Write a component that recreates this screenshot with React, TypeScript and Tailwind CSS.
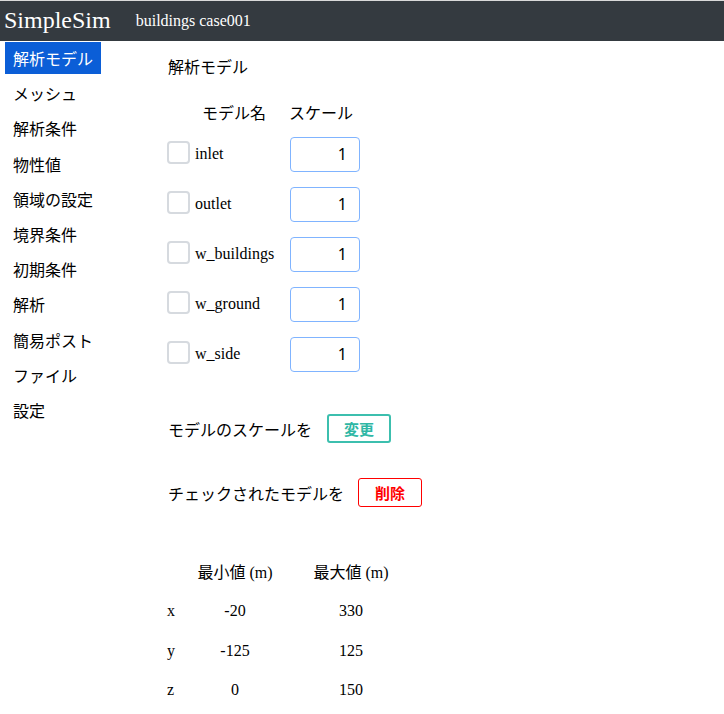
import { useState } from 'react'

const JP = "font-['Noto_Sans_CJK_JP',sans-serif]"
const SERIF = "font-['Liberation_Serif','Noto_Sans_CJK_JP',serif]"

const MENU = ['解析モデル', 'メッシュ', '解析条件', '物性値', '領域の設定', '境界条件', '初期条件', '解析', '簡易ポスト', 'ファイル', '設定']

const MODELS = ['inlet', 'outlet', 'w_buildings', 'w_ground', 'w_side']

const RANGES = [
  { axis: 'x', min: '-20', max: '330' },
  { axis: 'y', min: '-125', max: '125' },
  { axis: 'z', min: '0', max: '150' },
]

export default function App() {
  const [active, setActive] = useState(0)
  const [checked, setChecked] = useState<Record<string, boolean>>({})

  return (
    <div className="min-h-[714px] bg-white text-black">
      <header className="h-[41px] border-t border-[#d9d9d9] bg-[#343a40] flex items-center text-white">
        <span className={`${SERIF} text-[24px] leading-none ml-[4px] -mt-[3px]`}>SimpleSim</span>
        <span className={`${SERIF} text-[16px] leading-none ml-[25px]`}>buildings case001</span>
      </header>

      <div className="flex">
        <nav className="w-[167px] pt-[1px] pl-[5px] flex flex-col items-start">
          {MENU.map((m, i) => (
            <button
              key={m}
              onClick={() => setActive(i)}
              className={`${JP} text-[16px] leading-[32px] h-[32px] px-[8px] mb-[3.2px] text-left ${i === active ? 'bg-[#0b5ed7] text-white' : 'text-black'}`}
            >
              {m}
            </button>
          ))}
        </nav>

        <main className="flex-1">
          <h2 className={`${JP} text-[16px] leading-[24px] ml-[1px] mt-[13px]`}>解析モデル</h2>

          <div className={`${JP} text-[16px] leading-[24px] flex mt-[22px]`}>
            <span className="ml-[35px]">モデル名</span>
            <span className="ml-[23px]">スケール</span>
          </div>

          <div className="mt-[5px]">
            {MODELS.map(name => (
              <div key={name} className="h-[50px] flex items-center">
                <button
                  onClick={() => setChecked({ ...checked, [name]: !checked[name] })}
                  className="w-[23px] h-[23px] -mt-[3px] rounded-[4px] border-2 border-[#d6dadf] bg-white flex items-center justify-center text-[14px] leading-none"
                >
                  {checked[name] ? '✓' : ''}
                </button>
                <span className={`${SERIF} text-[16px] leading-none w-[95px] ml-[5px] -mt-[1px]`}>{name}</span>
                <input
                  defaultValue="1"
                  className="w-[70px] h-[35px] rounded-[4px] border border-[#80b4ff] text-right pr-[12px] text-[16px] font-['Noto_Sans',sans-serif] outline-none"
                />
              </div>
            ))}
          </div>

          <div className="flex items-center mt-[35px] ml-[1px]">
            <span className={`${JP} text-[16px] leading-[24px]`}>モデルのスケールを</span>
            <button className={`${JP} ml-[15px] w-[64px] h-[29px] rounded-[3px] border-2 border-[#3cbfae] text-[#2fb7a5] font-bold text-[15px] leading-none`}>
              変更
            </button>
          </div>

          <div className="flex items-center mt-[35px] ml-[1px]">
            <span className={`${JP} text-[16px] leading-[24px]`}>チェックされたモデルを</span>
            <button className={`${JP} ml-[14px] w-[64px] h-[29px] rounded-[3px] border border-[#ff0000] text-[#ff0000] font-bold text-[15px] leading-none`}>
              削除
            </button>
          </div>

          <div className={`${SERIF} text-[16px] leading-none grid grid-cols-[28px_80px_152px] mt-[58px]`}>
            <span />
            <span className="text-center h-[38px]">最小値 (m)</span>
            <span className="text-center h-[38px]">最大値 (m)</span>
            {RANGES.map(r => (
              <div key={r.axis} className="contents">
                <span className="h-[39.5px]">{r.axis}</span>
                <span className="text-center">{r.min}</span>
                <span className="text-center">{r.max}</span>
              </div>
            ))}
          </div>
        </main>
      </div>
    </div>
  )
}
